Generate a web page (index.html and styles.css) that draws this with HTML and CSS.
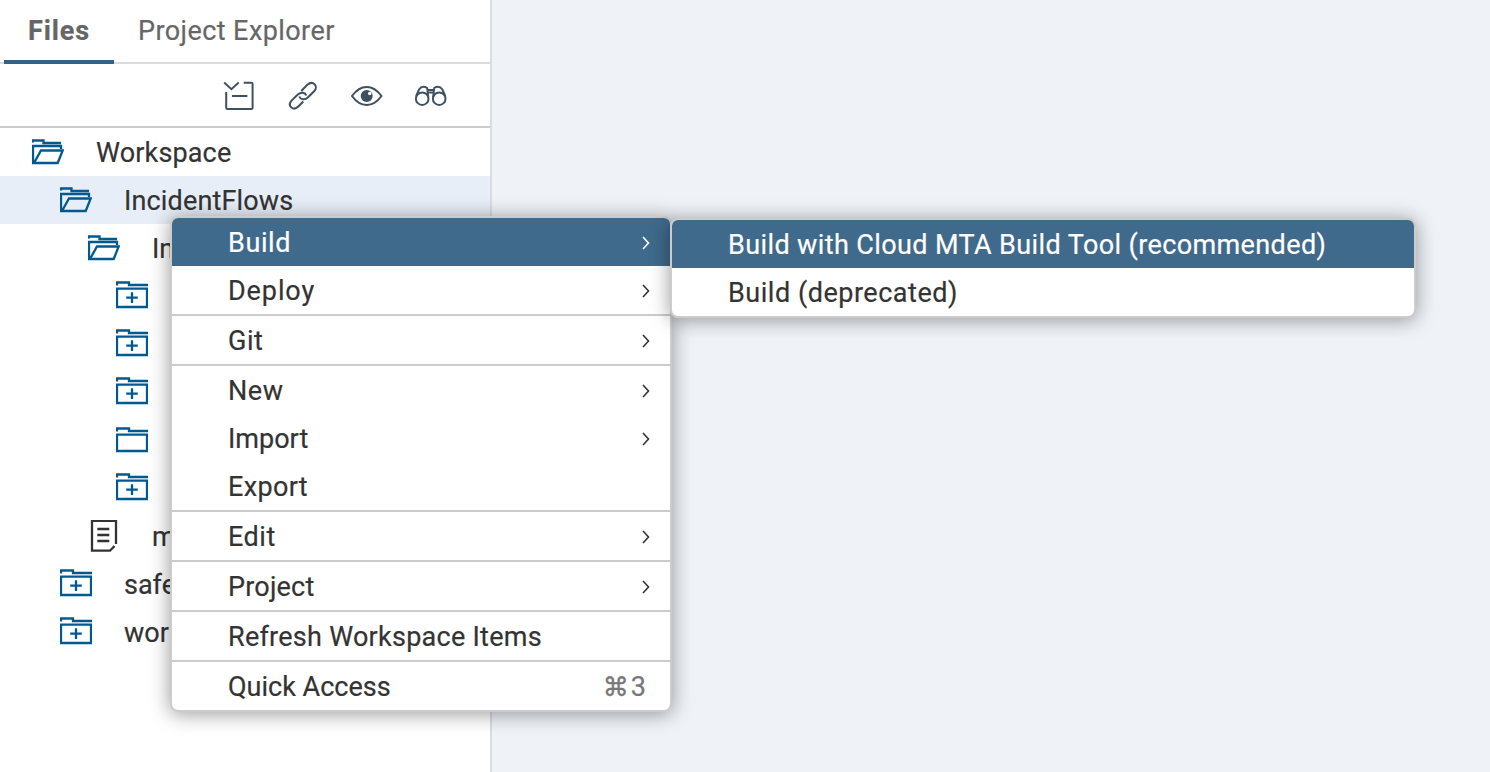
FILE: index.html
```html
<!DOCTYPE html>
<html lang="en">
<head>
<meta charset="utf-8">
<title>Workspace</title>
<link rel="stylesheet" href="styles.css">
</head>
<body>
<svg class="defs" width="0" height="0">
  <symbol id="open" viewBox="0 0 32 32"><path d="M1 6.500V4.500H11.500V7H29M5.500 27H1V10H29V13M2 27L9 14.500H30.700L25.700 27Z"/></symbol>
  <symbol id="plus" viewBox="0 0 32 32"><path d="M1 5.500V2.500H13V5H32M1 8.700H31V27H1ZM16 12.200V23M10.200 17.600H21.800"/></symbol>
  <symbol id="closed" viewBox="0 0 32 32"><path d="M1 7.500V4.500H13V7H32M1 10.700H31V27H1Z"/></symbol>
  <symbol id="doc" viewBox="0 0 32 32"><path d="M28 24V.8H4V30.700H22L26.500 26M9.300 9H21.300M9.300 15H21.300M9.300 21H21.300"/></symbol>
  <symbol id="arrow" viewBox="0 0 8 14"><path d="M1 1L6.500 7L1 13"/></symbol>
</svg>
<div class="app">
  <aside class="sidebar">
    <nav class="tabs">
      <div class="tab tab-active"><span class="t-files">Files</span></div>
      <div class="tab"><span class="t-explorer">Project Explorer</span></div>
    </nav>
    <div class="toolbar">
      <svg class="tool" viewBox="0 0 32 32"><path d="M1.200 2.500L8.400 9.200L15.700 2.500M20.700 2.800H28.400Q29.600 2.800 29.600 4V27.800Q29.600 29 28.400 29H4.400Q3.200 29 3.200 27.800V12M8.900 16H24.400"/></svg>
      <svg class="tool" viewBox="0 0 32 32"><path transform="translate(.8 0)" d="M13.500 11L19.500 4.800C25 0 31 6 26.500 11L20 17.500C17 20.500 12.500 19.500 11.500 16.500M15.500 21.500L10.500 26.500C5.500 31.500 -.5 26 3.500 20.800L10 14.500C13.500 11.500 17.500 12.500 18.500 15.500"/></svg>
      <svg class="tool" viewBox="0 0 32 32"><path d="M1 16Q7.500 7 15.700 7T30.500 16Q24 25 15.700 25T1 16Z"/><circle class="solid" cx="15.700" cy="16" r="6"/><circle class="glint" cx="18.700" cy="13.500" r="1.700"/></svg>
      <svg class="tool" viewBox="0 0 32 32"><circle cx="7.200" cy="18.700" r="6.300"/><circle cx="24.200" cy="18.700" r="6.300"/><path d="M1.200 16L4 9.500Q7.200 5 12.200 8L13.200 17M30.200 16L27.400 9.500Q24.200 5 19.200 8L18.200 17M12.700 10H18.700M13.200 12.500H18.200"/></svg>
    </div>
    <div class="tree">
      <div class="row"><svg class="icon"><use href="#open"/></svg><span class="t-workspace">Workspace</span></div>
      <div class="row level-1 selected"><svg class="icon"><use href="#open"/></svg><span class="t-incident">IncidentFlows</span></div>
      <div class="row level-2"><svg class="icon"><use href="#open"/></svg><span>In</span></div>
      <div class="row level-3"><svg class="icon"><use href="#plus"/></svg></div>
      <div class="row level-3"><svg class="icon"><use href="#plus"/></svg></div>
      <div class="row level-3"><svg class="icon"><use href="#plus"/></svg></div>
      <div class="row level-3"><svg class="icon"><use href="#closed"/></svg></div>
      <div class="row level-3"><svg class="icon"><use href="#plus"/></svg></div>
      <div class="row level-2"><svg class="icon dark"><use href="#doc"/></svg><span>m</span></div>
      <div class="row level-1"><svg class="icon"><use href="#plus"/></svg><span>safe</span></div>
      <div class="row level-1"><svg class="icon"><use href="#plus"/></svg><span>wor</span></div>
    </div>
  </aside>
  <main class="editor"></main>
</div>
<div class="menu context">
  <div class="item active"><span class="t-build">Build</span><svg class="arrow"><use href="#arrow"/></svg></div>
  <div class="item"><span class="t-deploy">Deploy</span><svg class="arrow"><use href="#arrow"/></svg></div>
  <div class="item divided"><span class="t-git">Git</span><svg class="arrow"><use href="#arrow"/></svg></div>
  <div class="item divided"><span class="t-new">New</span><svg class="arrow"><use href="#arrow"/></svg></div>
  <div class="item"><span class="t-import">Import</span><svg class="arrow"><use href="#arrow"/></svg></div>
  <div class="item"><span class="t-export">Export</span></div>
  <div class="item divided"><span class="t-edit">Edit</span><svg class="arrow"><use href="#arrow"/></svg></div>
  <div class="item divided"><span class="t-project">Project</span><svg class="arrow"><use href="#arrow"/></svg></div>
  <div class="item divided"><span class="t-refresh">Refresh Workspace Items</span></div>
  <div class="item divided"><span class="t-quick">Quick Access</span><span class="shortcut"><span class="cmd">⌘</span>3</span></div>
</div>
<div class="menu submenu">
  <div class="item active"><span class="t-mta">Build with Cloud MTA Build Tool (recommended)</span></div>
  <div class="item"><span class="t-deprecated">Build (deprecated)</span></div>
</div>
</body>
</html>
```
FILE: styles.css
```css
* { box-sizing: border-box; }
body { margin: 0; font: 27px/48px Roboto, "Liberation Sans", sans-serif; color: #333; overflow: hidden; -webkit-text-stroke: .2px currentColor; }
svg { fill: none; flex: none; }
.defs { position: absolute; }
.app { display: flex; height: 772px; }
.sidebar { width: 492px; background: #fff; border-right: 2px solid #d9dce3; }
.editor { flex: 1; background: #eff3f8; }
.tabs { display: flex; height: 64px; padding-left: 4px; border-bottom: 2px solid #d9dbe0; color: #666; line-height: 63px; }
.tab { height: 64px; padding: 0 24px; white-space: nowrap; }
.tab-active { width: 110px; border-bottom: 4px solid #346187; font-weight: 700; }
.toolbar { display: flex; justify-content: flex-end; gap: 32px; height: 64px; padding: 16px 43px 0 0; border-bottom: 2px solid #ccc; }
.tool { width: 32px; height: 32px; stroke: #3f5161; stroke-width: 2; overflow: visible; }
.solid { fill: #3f5161; stroke: none; }
.glint { fill: #fff; stroke: none; }
.row { display: flex; align-items: center; gap: 32px; height: 48px; padding-left: 32px; line-height: 50px; }
.row span { padding-top: 2px; }
.level-1 { padding-left: 60px; }
.level-2 { padding-left: 88px; }
.level-3 { padding-left: 116px; }
.selected { background: #e8eef7; }
.icon { width: 32px; height: 32px; stroke: #005a8e; stroke-width: 2.3; }
.dark { stroke: #333; }
.menu { position: absolute; background: #fff; border: 2px solid #ccc; border-radius: 8px; overflow: hidden; box-shadow: 0 2px 20px rgba(0, 0, 0, .4); }
.context { left: 170px; top: 216px; width: 502px; }
.submenu { left: 670px; top: 218px; width: 746px; }
.item { display: flex; align-items: center; justify-content: space-between; height: 48px; padding: 2px 20px 0 56px; white-space: nowrap; }
.divided { height: 50px; border-top: 2px solid #ccc; }
.active { background: #3f6a8b; color: #fff; }
.arrow { width: 8px; height: 14px; stroke: currentColor; stroke-width: 1.6; }
.shortcut { display: flex; color: #777; padding-right: 4px; gap: 2px; }
.cmd { font-family: "DejaVu Sans", sans-serif; font-size: 26px; -webkit-text-stroke-width: .4px; }
.t-files { letter-spacing: .9px; }
.t-explorer { letter-spacing: .42px; }
.t-workspace, .t-incident { letter-spacing: .15px; }
.t-build, .t-new { letter-spacing: .6px; }
.t-deploy { letter-spacing: .9px; }
.t-git, .t-edit { letter-spacing: .5px; }
.t-export { letter-spacing: .35px; }
.t-project { letter-spacing: .2px; }
.t-refresh { letter-spacing: .26px; }
.t-mta { letter-spacing: .39px; }
.t-deprecated { letter-spacing: .52px; }
```
